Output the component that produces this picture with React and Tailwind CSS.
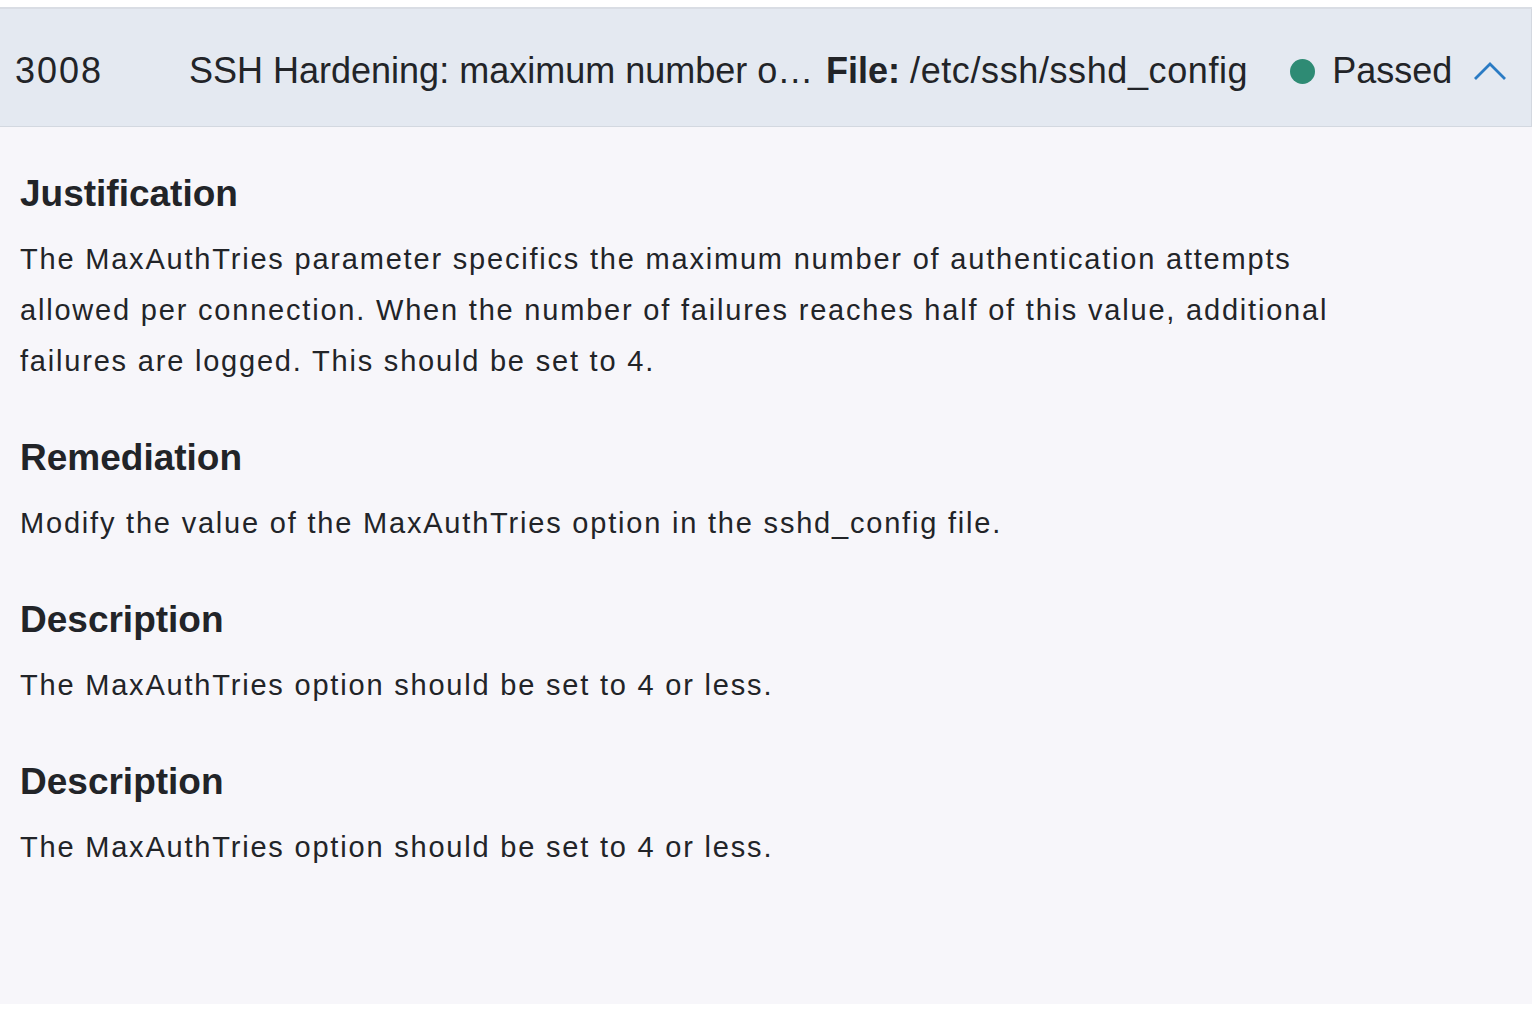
import React, { useState } from 'react'

const sections = [
    {
        title: 'Justification',
        body: 'The MaxAuthTries parameter specifics the maximum number of authentication attempts allowed per connection. When the number of failures reaches half of this value, additional failures are logged. This should be set to 4.',
    },
    {
        title: 'Remediation',
        body: 'Modify the value of the MaxAuthTries option in the sshd_config file.',
    },
    {
        title: 'Description',
        body: 'The MaxAuthTries option should be set to 4 or less.',
    },
    {
        title: 'Description',
        body: 'The MaxAuthTries option should be set to 4 or less.',
    },
];

const CheckRow = () => {
    const [open, setOpen] = useState(true);

    return (
        <div className="w-[1532px] bg-[#f7f6fa] border-t-2 border-[#d9dde4]">
            <button
                type="button"
                onClick={() => setOpen(!open)}
                className="w-full h-[118px] pt-[7px] flex items-center bg-[#e4e9f1] border-b border-r border-[#d3d8e0] text-[#222428] text-[36px] text-left"
            >
                <span className="w-[189px] pl-[15px] shrink-0 tracking-[2px]">3008</span>
                <span className="w-[633px] shrink-0 truncate">SSH Hardening: maximum number of authentication attempts</span>
                <span className="shrink-0 ml-[4px]">
                    <b className="font-bold">File:</b> <span className="tracking-[0.6px]">/etc/ssh/sshd_config</span>
                </span>
                <span className="ml-[42px] w-[25px] h-[25px] rounded-full bg-[#2e8b74] shrink-0" />
                <span className="ml-[17px] shrink-0">Passed</span>
                <svg
                    className={`ml-[21px] w-[34px] h-[22px] shrink-0 ${open ? '' : 'rotate-180'}`}
                    viewBox="0 0 34 22"
                    fill="none"
                    stroke="#2a7bc4"
                    strokeWidth="2.8"
                >
                    <path d="M2 19 L17 4 L32 19" />
                </svg>
            </button>
            {open && (
                <div className="px-[20px] pt-[43px] pb-[131px] text-[#222428]">
                    {sections.map((s, i) => (
                        <div key={i} className="mb-[47px] last:mb-0">
                            <h2 className="text-[37px] font-bold leading-[48px]">{s.title}</h2>
                            <p className="mt-[16px] text-[29px] tracking-[1.8px] leading-[51px] max-w-[1390px]">{s.body}</p>
                        </div>
                    ))}
                </div>
            )}
        </div>
    );
};

const App = () => {
    return (
        <div className="min-h-screen bg-white pt-[7px]" style={{ fontFamily: '"Liberation Sans", Arial, sans-serif' }}>
            <CheckRow />
        </div>
    );
};

export default App;
